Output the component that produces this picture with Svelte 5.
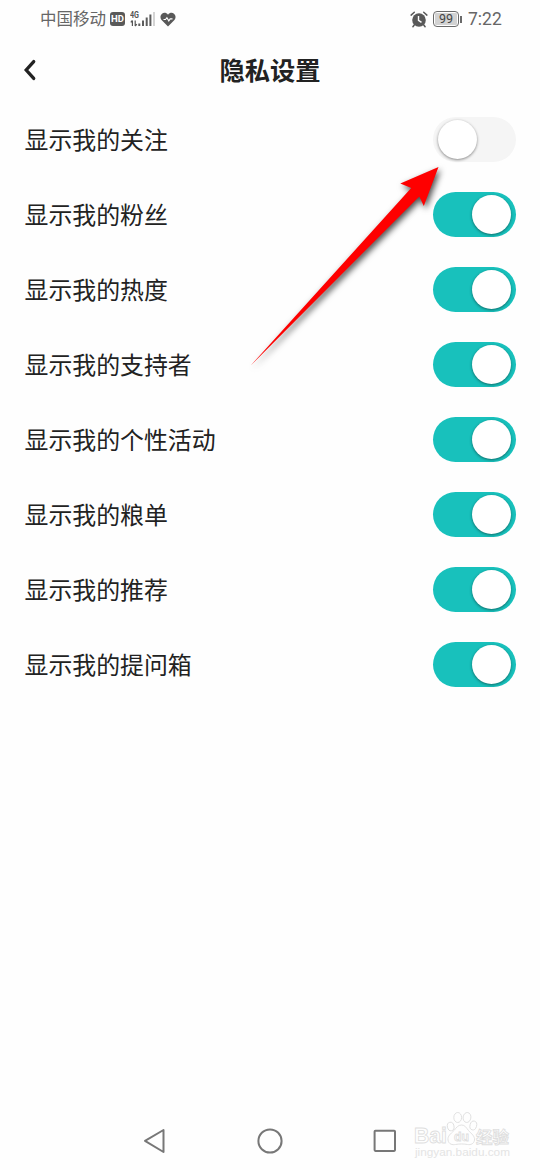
<script>
  let settings = $state([
    { label: '显示我的关注', on: false },
    { label: '显示我的粉丝', on: true },
    { label: '显示我的热度', on: true },
    { label: '显示我的支持者', on: true },
    { label: '显示我的个性活动', on: true },
    { label: '显示我的粮单', on: true },
    { label: '显示我的推荐', on: true },
    { label: '显示我的提问箱', on: true }
  ]);

  function toggle(item) {
    item.on = !item.on;
  }
</script>

<div class="screen">
  <div class="status-bar">
    <div class="status-left">
      <span class="carrier">中国移动</span>
      <span class="hd">HD</span>
      <svg class="signal" width="26" height="18" viewBox="0 0 26 18">
        <text x="0" y="8" class="net" textLength="9" lengthAdjust="spacingAndGlyphs">4G</text>
        <g fill="none" stroke="#555" stroke-width="1.2">
          <path d="M2.4 16v-5.5M.8 12.4l1.6-1.9M5.2 10.5V16M6.8 14.1L5.2 16" />
        </g>
        <g fill="#5c5c5c">
          <rect x="8.3" y="13.5" width="2" height="2.5" />
          <rect x="12" y="10.5" width="2" height="5.5" />
          <rect x="15.7" y="7.5" width="2" height="8.5" />
          <rect x="19.4" y="4.5" width="2" height="11.5" />
        </g>
        <rect x="23" y="2" width="2" height="14" fill="#d4d4d4" />
      </svg>
      <svg class="heart" width="16" height="15" viewBox="0 0 16 15">
        <path d="M8 14.4L1.8 8.3C-.2 6.1.2 3.1 2 1.7 4 .2 6.5.8 8 2.7 9.5.8 12 .2 14 1.7c1.8 1.4 2.2 4.4.2 6.6z" fill="#595959" />
        <path d="M3.5 7.5h2l1.4-1.8 1.9 3.2 1.4-2h2.3" fill="none" stroke="#fff" stroke-width="1.1" />
      </svg>
    </div>
    <div class="status-right">
      <svg class="alarm" width="18" height="17" viewBox="0 0 18 17">
        <circle cx="9" cy="9" r="6.8" fill="#595959" />
        <path d="M1.1 4.1L4.3 1.3M13.7 1.3l3.2 2.8M4.4 13.7l-1.5 2M13.6 13.7l1.5 2" stroke="#595959" stroke-width="1.5" stroke-linecap="round" />
        <path d="M8.5 5v4.3l3 2.1" fill="none" stroke="#fff" stroke-width="1.4" />
      </svg>
      <div class="battery"><span>99</span></div>
      <span class="cap"></span>
      <span class="time">7:22</span>
    </div>
  </div>

  <header>
    <button class="back" aria-label="返回">
      <svg width="14" height="22" viewBox="0 0 14 22">
        <path d="M10.7 2.6L3.2 11l7.5 8.4" fill="none" stroke="#222" stroke-width="3.3" stroke-linecap="round" stroke-linejoin="miter" />
      </svg>
    </button>
    <h1>隐私设置</h1>
  </header>

  <main>
    {#each settings as item}
      <div class="row">
        <span class="label">{item.label}</span>
        <button
          class="switch"
          class:on={item.on}
          role="switch"
          aria-checked={item.on}
          aria-label={item.label}
          onclick={() => toggle(item)}
        >
          <span class="knob"></span>
        </button>
      </div>
    {/each}
  </main>

  <nav>
    <svg width="26" height="28" viewBox="0 0 26 28">
      <path d="M3 13.8L21.5 3v22z" />
    </svg>
    <svg width="26" height="28" viewBox="0 0 26 28">
      <circle cx="13" cy="14" r="11.6" />
    </svg>
    <svg width="26" height="28" viewBox="0 0 26 28">
      <rect x="2.6" y="3.7" width="20.4" height="20.2" rx="0.8" />
    </svg>
  </nav>

  <!-- pointer to the first switch -->
  <svg class="arrow" width="220" height="230" viewBox="240 150 220 230">
    <path d="M438.5 167L400.3 183.5 411.2 188 250.5 365.7 419.3 196.5 423.8 206z" fill="#fe0000" />
  </svg>

  <svg class="watermark" width="110" height="56" viewBox="0 0 110 56">
    <g class="outline">
      <text x="4" y="37" class="brand" textLength="33" lengthAdjust="spacingAndGlyphs">Bai</text>
      <ellipse cx="40.7" cy="20.5" rx="3.3" ry="4.3" transform="rotate(-12 40.7 20.5)" />
      <ellipse cx="47.7" cy="11.5" rx="3.9" ry="5" />
      <ellipse cx="57" cy="11.5" rx="3.9" ry="5" transform="rotate(8 57 11.5)" />
      <ellipse cx="63.3" cy="19.5" rx="3.3" ry="4.5" transform="rotate(15 63.3 19.5)" />
      <path d="M51.5 19c-3.500 0-5 2.500-7.500 5.500-3.500 3.500-6.500 5.500-6 9.500.7 4.500 4.500 5 7.500 4.500 4-.7 8-.7 12 0 3 .5 6.500-.5 7-4.500.5-4-3-6-6-9.500-2.500-3-3.500-5.500-7-5.500z" />
      <text x="44" y="35" class="du" textLength="15" lengthAdjust="spacingAndGlyphs">du</text>
      <text x="66" y="37" class="exp" textLength="33" lengthAdjust="spacingAndGlyphs">经验</text>
    </g>
    <text x="5" y="49.5" class="site" textLength="95" lengthAdjust="spacingAndGlyphs">jingyan.baidu.com</text>
  </svg>
</div>

<style>
  :global(body) {
    background: #fefefe;
  }

  .screen {
    position: relative;
    display: flex;
    flex-direction: column;
    width: 540px;
    height: 1170px;
    overflow: hidden;
    background: #fefefe;
    color: #222;
    font-family: "Noto Sans CJK SC", sans-serif;
  }

  button {
    padding: 0;
    border: 0;
    background: none;
    cursor: pointer;
  }

  svg {
    display: block;
    flex: none;
  }

  .status-bar {
    display: flex;
    justify-content: space-between;
    height: 38px;
    padding: 0 38px 0 40px;
    box-sizing: border-box;
    color: #666;
  }

  .status-left,
  .status-right {
    display: flex;
    align-items: center;
  }

  .carrier {
    height: 38px;
    font-size: 16.5px;
    line-height: 37px;
  }

  .hd {
    width: 15px;
    height: 14px;
    margin-left: 4px;
    border-radius: 3px;
    background: #595959;
    color: #fff;
    font: bold 9.5px/14px Roboto, sans-serif;
    text-align: center;
  }

  .signal {
    margin: 0 0 0 5px;
  }

  .net {
    font: bold 9px Roboto, sans-serif;
    fill: #555;
  }

  .heart {
    margin-left: 4px;
  }

  .battery {
    width: 26px;
    height: 16px;
    margin-left: 5px;
    padding: 1px;
    box-sizing: border-box;
    border: 1.5px solid #6a6a6a;
    border-radius: 4px;
  }

  .battery span {
    display: block;
    height: 12px;
    border-radius: 1px;
    background: #d2d2d2;
    color: #444;
    font: 12.5px/12px Roboto, sans-serif;
    text-align: center;
  }

  .cap {
    width: 2px;
    height: 7px;
    margin-left: 1px;
    background: #6a6a6a;
  }

  .time {
    width: 34px;
    margin-left: 6px;
    font: 17.5px/38px Roboto, sans-serif;
    white-space: nowrap;
  }

  header {
    display: grid;
    grid-template-columns: 60px 1fr 60px;
    align-items: center;
    height: 64px;
  }

  .back {
    padding-left: 23px;
  }

  h1 {
    margin: 0;
    padding-bottom: 2px;
    font-size: 25.3px;
    font-weight: 700;
    line-height: 36px;
    text-align: center;
  }

  .row {
    display: flex;
    align-items: center;
    justify-content: space-between;
    height: 75px;
    padding: 0 24px 0 24.5px;
    font-size: 23.9px;
  }

  .label {
    padding-bottom: 2px;
  }

  .switch {
    display: flex;
    align-items: center;
    width: 83px;
    height: 45px;
    padding: 0 5px;
    border-radius: 23px;
    background: #f5f5f5;
  }

  .switch.on {
    justify-content: flex-end;
    background: #18c1bc;
  }

  .knob {
    width: 39px;
    height: 39px;
    border-radius: 50%;
    background: #fff;
    box-shadow: 0 1px 3px rgba(0, 0, 0, 0.45);
  }

  nav {
    display: flex;
    justify-content: space-between;
    margin-top: auto;
    padding: 0 142px 15px;
  }

  nav svg {
    fill: none;
    stroke: #777;
    stroke-width: 2;
    stroke-linejoin: round;
  }

  .arrow {
    position: absolute;
    top: 150px;
    left: 240px;
    filter: drop-shadow(2px 3px 3px rgba(0, 0, 0, 0.7));
    pointer-events: none;
  }

  .watermark {
    position: absolute;
    top: 1106px;
    left: 410px;
  }

  .outline {
    fill: #fefefe;
    stroke: #dedede;
    stroke-width: 0.9;
  }

  .brand {
    font: bold 22px "Liberation Sans", sans-serif;
  }

  .du {
    font: bold 13px "Liberation Sans", sans-serif;
  }

  .exp {
    font: bold 16px/1 "Noto Sans CJK SC", sans-serif;
  }

  .site {
    font: 11px "Liberation Sans", sans-serif;
    fill: #e4e4e4;
  }
</style>
